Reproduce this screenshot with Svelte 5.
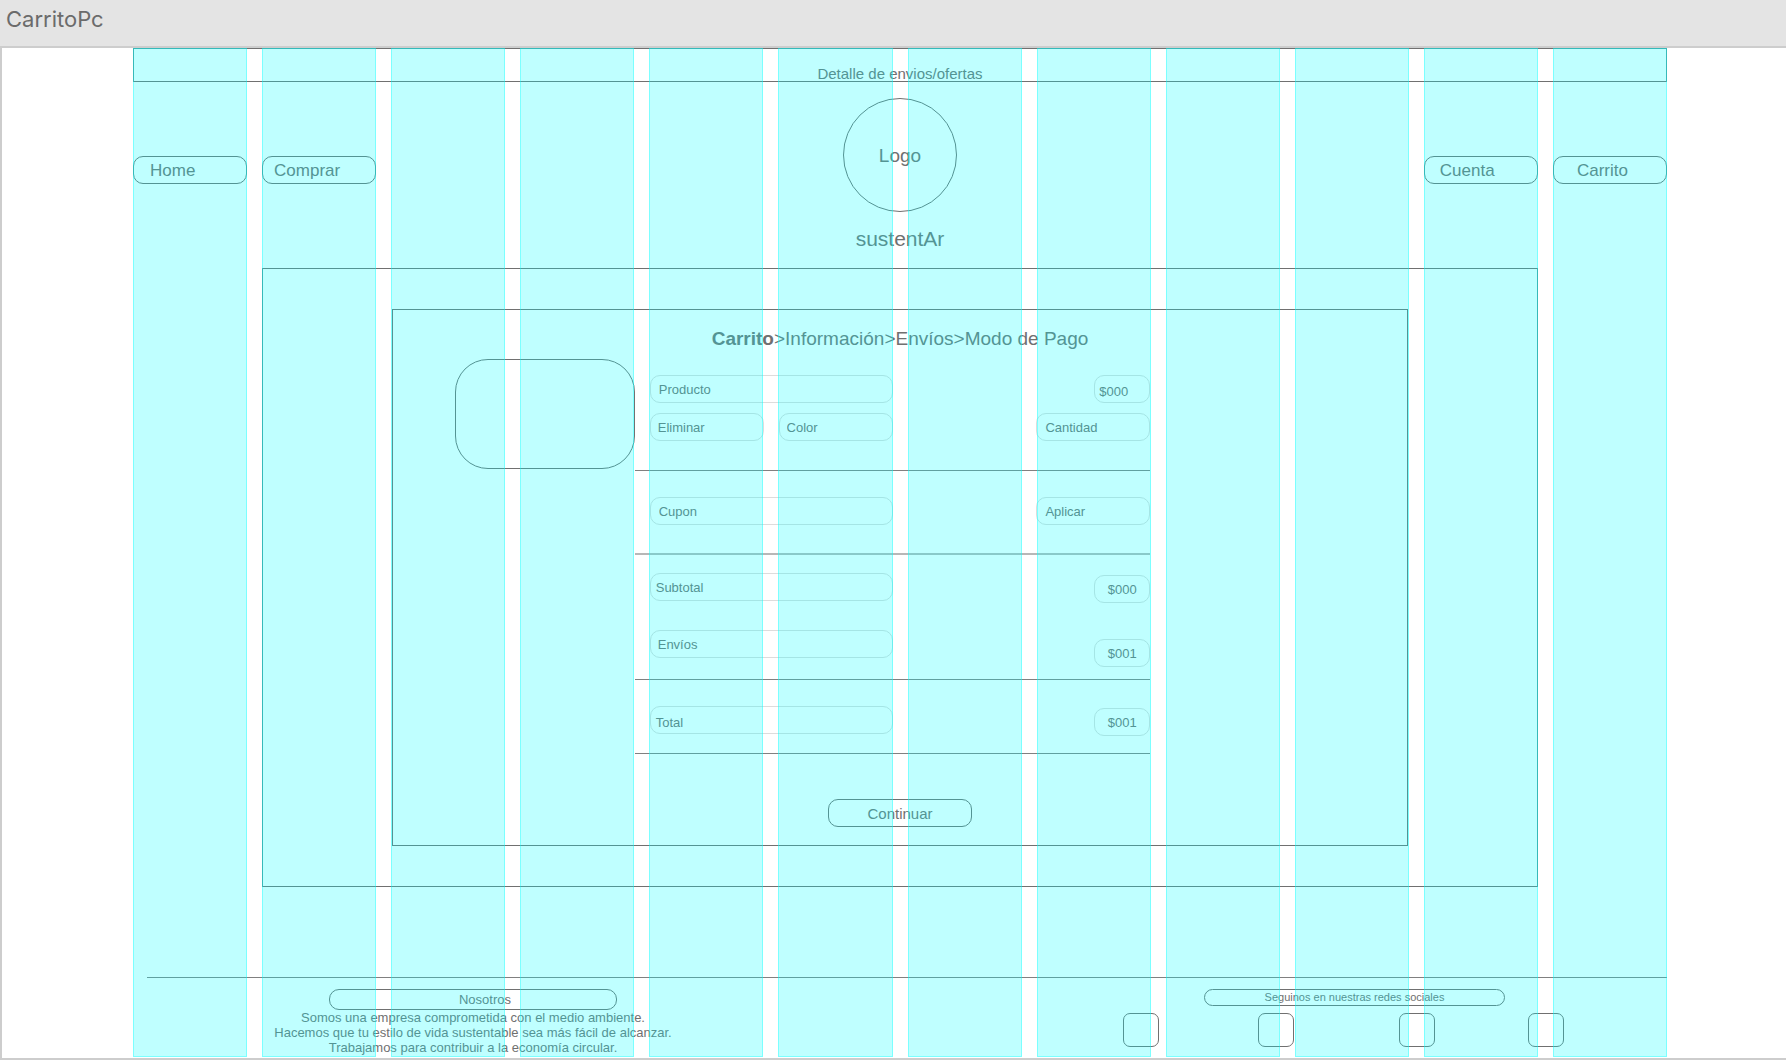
<script>
  const columns = Array.from({ length: 12 }, (_, i) => i);
  const networks = ['Facebook', 'Instagram', 'Twitter', 'YouTube'];
  const steps = ['Información', 'Envíos', 'Modo de Pago'];
</script>

<div class="window">
  <h1 class="titlebar">CarritoPc</h1>

  <div class="artboard">
    <div class="page">
      <div class="promo">Detalle de envios/ofertas</div>

      <header class="top">
        <a class="pill nav home" href="#home">Home</a>
        <a class="pill nav shop" href="#comprar">Comprar</a>
        <div class="brand">
          <div class="logo">Logo</div>
          <div class="name">sustentAr</div>
        </div>
        <a class="pill nav account" href="#cuenta">Cuenta</a>
        <a class="pill nav cart" href="#carrito">Carrito</a>
      </header>

      <main class="outer">
        <form class="inner" onsubmit={(e) => e.preventDefault()}>
          <nav class="steps" aria-label="Pasos de compra">
            <b>Carrito</b>{#each steps as step}&gt;<a href="#paso">{step}</a>{/each}
          </nav>

          <div class="photo"></div>

          <div class="details">
            <section class="product">
              <div class="pill field wide">Producto</div>
              <div class="pill field price low start">$000</div>
              <button type="button" class="pill field one">Eliminar</button>
              <select class="pill field two" aria-label="Color">
                <option>Color</option>
              </select>
              <input class="pill field last" aria-label="Cantidad" placeholder="Cantidad" />
            </section>

            <section class="coupon">
              <input class="pill field wide" aria-label="Cupon" placeholder="Cupon" />
              <button type="button" class="pill field last">Aplicar</button>
            </section>

            <section class="totals">
              <div class="labels">
                <div class="pill field tight">Subtotal</div>
                <div class="pill field">Envíos</div>
              </div>
              <div class="amounts">
                <div class="pill field price">$000</div>
                <div class="pill field price">$001</div>
              </div>
            </section>

            <section class="total">
              <div class="labels"><div class="pill field tight low">Total</div></div>
              <div class="amounts"><div class="pill field price">$001</div></div>
            </section>
          </div>

          <button type="submit" class="pill next">Continuar</button>
        </form>
      </main>

      <footer class="bottom">
        <section class="about">
          <h2 class="pill">Nosotros</h2>
          <p>Somos una empresa comprometida con el medio ambiente.</p>
          <p>Hacemos que tu estilo de vida sustentable sea más fácil de alcanzar.</p>
          <p>Trabajamos para contribuir a la economía circular.</p>
        </section>
        <section class="social">
          <h2 class="pill">Seguinos en nuestras redes sociales</h2>
          <div class="links">
            {#each networks as network}
              <a href="#red" aria-label={network}></a>
            {/each}
          </div>
        </section>
      </footer>
    </div>

    <div class="guides" aria-hidden="true">
      {#each columns as column (column)}
        <i></i>
      {/each}
    </div>
  </div>
</div>

<style>
  :global(body) {
    margin: 0;
  }

  .window,
  .window * {
    box-sizing: border-box;
  }

  .window {
    --ink: #707070;
    --left: 131px;
    --right: 119px;
    display: flex;
    flex-direction: column;
    min-height: 100vh;
    font-family: "Liberation Sans", Arial, Helvetica, sans-serif;
    font-size: 13px;
    line-height: 15px;
    color: var(--ink);
    background: #fff;
  }

  .titlebar {
    margin: 0;
    height: 46px;
    padding: 5px 6px;
    font: 400 22px/28px Inter, "Liberation Sans", sans-serif;
    color: #6b6b6b;
    background: #e4e4e4;
  }

  .artboard {
    position: relative;
    flex: 1;
    border: 2px solid #cdcdcd;
    border-right: 0;
  }

  .page {
    padding: 0 var(--right) 2px var(--left);
  }

  .pill {
    display: flex;
    align-items: center;
    height: 28px;
    margin: 0;
    border: 1px solid var(--ink);
    border-radius: 10px;
    font: inherit;
    color: inherit;
    background: none;
    text-decoration: none;
    text-align: left;
  }

  .promo {
    display: flex;
    align-items: flex-end;
    justify-content: center;
    height: 34px;
    border: 1px solid var(--ink);
    font-size: 15px;
    line-height: 15px;
  }

  .top {
    display: grid;
    grid-template-columns: repeat(12, minmax(0, 1fr));
    column-gap: 15px;
    padding: 16px 0 17px;
  }

  .top > * {
    grid-row: 1;
  }

  .nav {
    margin-top: 58px;
    font-size: 17px;
  }

  .home {
    grid-column: 1;
    padding-left: 16px;
  }

  .shop {
    grid-column: 2;
    padding-left: 11px;
  }

  .account {
    grid-column: 11;
    padding-left: 15px;
  }

  .cart {
    grid-column: 12;
    padding-left: 23px;
  }

  .brand {
    grid-column: 3 / 11;
    display: flex;
    flex-direction: column;
    align-items: center;
    gap: 15px;
  }

  .logo {
    display: grid;
    place-items: center;
    width: 114px;
    height: 114px;
    border: 1px solid var(--ink);
    border-radius: 50%;
    font-size: 19px;
  }

  .name {
    font-size: 21px;
    line-height: 24px;
  }

  .outer {
    display: grid;
    grid-template-columns: repeat(10, minmax(0, 1fr));
    column-gap: 15px;
    margin: 0 calc((100% - 165px) / 12 + 15px);
    padding: 40px 0;
    border: 1px solid var(--ink);
  }

  .inner {
    grid-column: 2 / 10;
    display: grid;
    grid-template-columns: subgrid;
    align-items: start;
    padding: 18px 0;
    border: 1px solid var(--ink);
  }

  .steps {
    grid-column: 1 / -1;
    text-align: center;
    font-size: 19px;
    line-height: 22px;
  }

  .steps a {
    color: inherit;
    text-decoration: none;
  }

  .photo {
    grid-column: 1 / 3;
    justify-self: end;
    width: 180px;
    height: 110px;
    margin-top: 9px;
    border: 1px solid var(--ink);
    border-radius: 33px;
  }

  .details {
    grid-column: 3 / 7;
    display: grid;
    grid-template-columns: subgrid;
    margin-top: 9px;
  }

  .details section {
    grid-column: 1 / -1;
    display: grid;
    grid-template-columns: subgrid;
    align-items: start;
    margin-left: -15px;
    padding-left: 15px;
    border-bottom: 1px solid #808080;
  }

  .details .product {
    row-gap: 10px;
    padding-top: 16px;
    padding-bottom: 29px;
  }

  .details .coupon {
    padding-top: 26px;
    padding-bottom: 28px;
    border-bottom: 2px solid #b7b7b7;
  }

  .details .totals {
    padding-top: 18px;
    padding-bottom: 12px;
  }

  .details .total {
    padding-top: 26px;
    padding-bottom: 17px;
  }

  .field {
    min-width: 0;
    width: 100%;
    padding: 0 7px;
    border-color: #dcdcdc;
    appearance: none;
  }

  .field::placeholder {
    color: inherit;
    opacity: 1;
  }

  .tight {
    padding-left: 5px;
  }

  .low {
    padding-top: 4px;
  }

  .wide,
  .labels {
    grid-column: 1 / 3;
  }

  .wide,
  .last {
    padding-left: 8px;
  }

  .one {
    grid-column: 1;
  }

  .two {
    grid-column: 2;
  }

  .last,
  .amounts {
    grid-column: 4;
  }

  .price {
    grid-column: 4;
    justify-self: end;
    justify-content: center;
    width: 56px;
  }

  .start {
    justify-content: flex-start;
    padding-left: 4px;
  }

  .labels,
  .amounts {
    display: flex;
    flex-direction: column;
    gap: 29px;
  }

  .amounts {
    align-items: flex-end;
    gap: 36px;
    padding-top: 2px;
  }

  .next {
    grid-column: 1 / -1;
    justify-self: center;
    justify-content: center;
    width: 144px;
    margin-top: 45px;
    font-size: 15px;
  }

  .bottom {
    display: flex;
    justify-content: space-between;
    margin: 90px 0 0 14px;
    padding: 11px 103px 0 122px;
    border-top: 1px solid #808080;
  }

  .bottom h2 {
    justify-content: center;
    font-weight: 400;
  }

  .about {
    display: flex;
    flex-direction: column;
    align-items: center;
    width: 408px;
    text-align: center;
  }

  .about h2 {
    width: 288px;
    height: 21px;
    padding-left: 24px;
  }

  .about p {
    margin: 0;
    white-space: nowrap;
  }

  .social {
    display: flex;
    flex-direction: column;
    gap: 7px;
  }

  .social h2 {
    width: 301px;
    height: 17px;
    margin-left: 81px;
    font-size: 11px;
  }

  .links {
    display: grid;
    grid-template-columns: 135px 141px 129px 36px;
  }

  .links a {
    width: 36px;
    height: 34px;
    border: 1px solid var(--ink);
    border-radius: 7px;
  }

  .guides {
    position: absolute;
    inset: 0 var(--right) 1px var(--left);
    display: grid;
    grid-template-columns: repeat(12, minmax(0, 1fr));
    column-gap: 15px;
    pointer-events: none;
  }

  .guides i {
    border: 1px solid rgba(0, 255, 255, 0.35);
    background: rgba(0, 255, 255, 0.25);
  }
</style>
